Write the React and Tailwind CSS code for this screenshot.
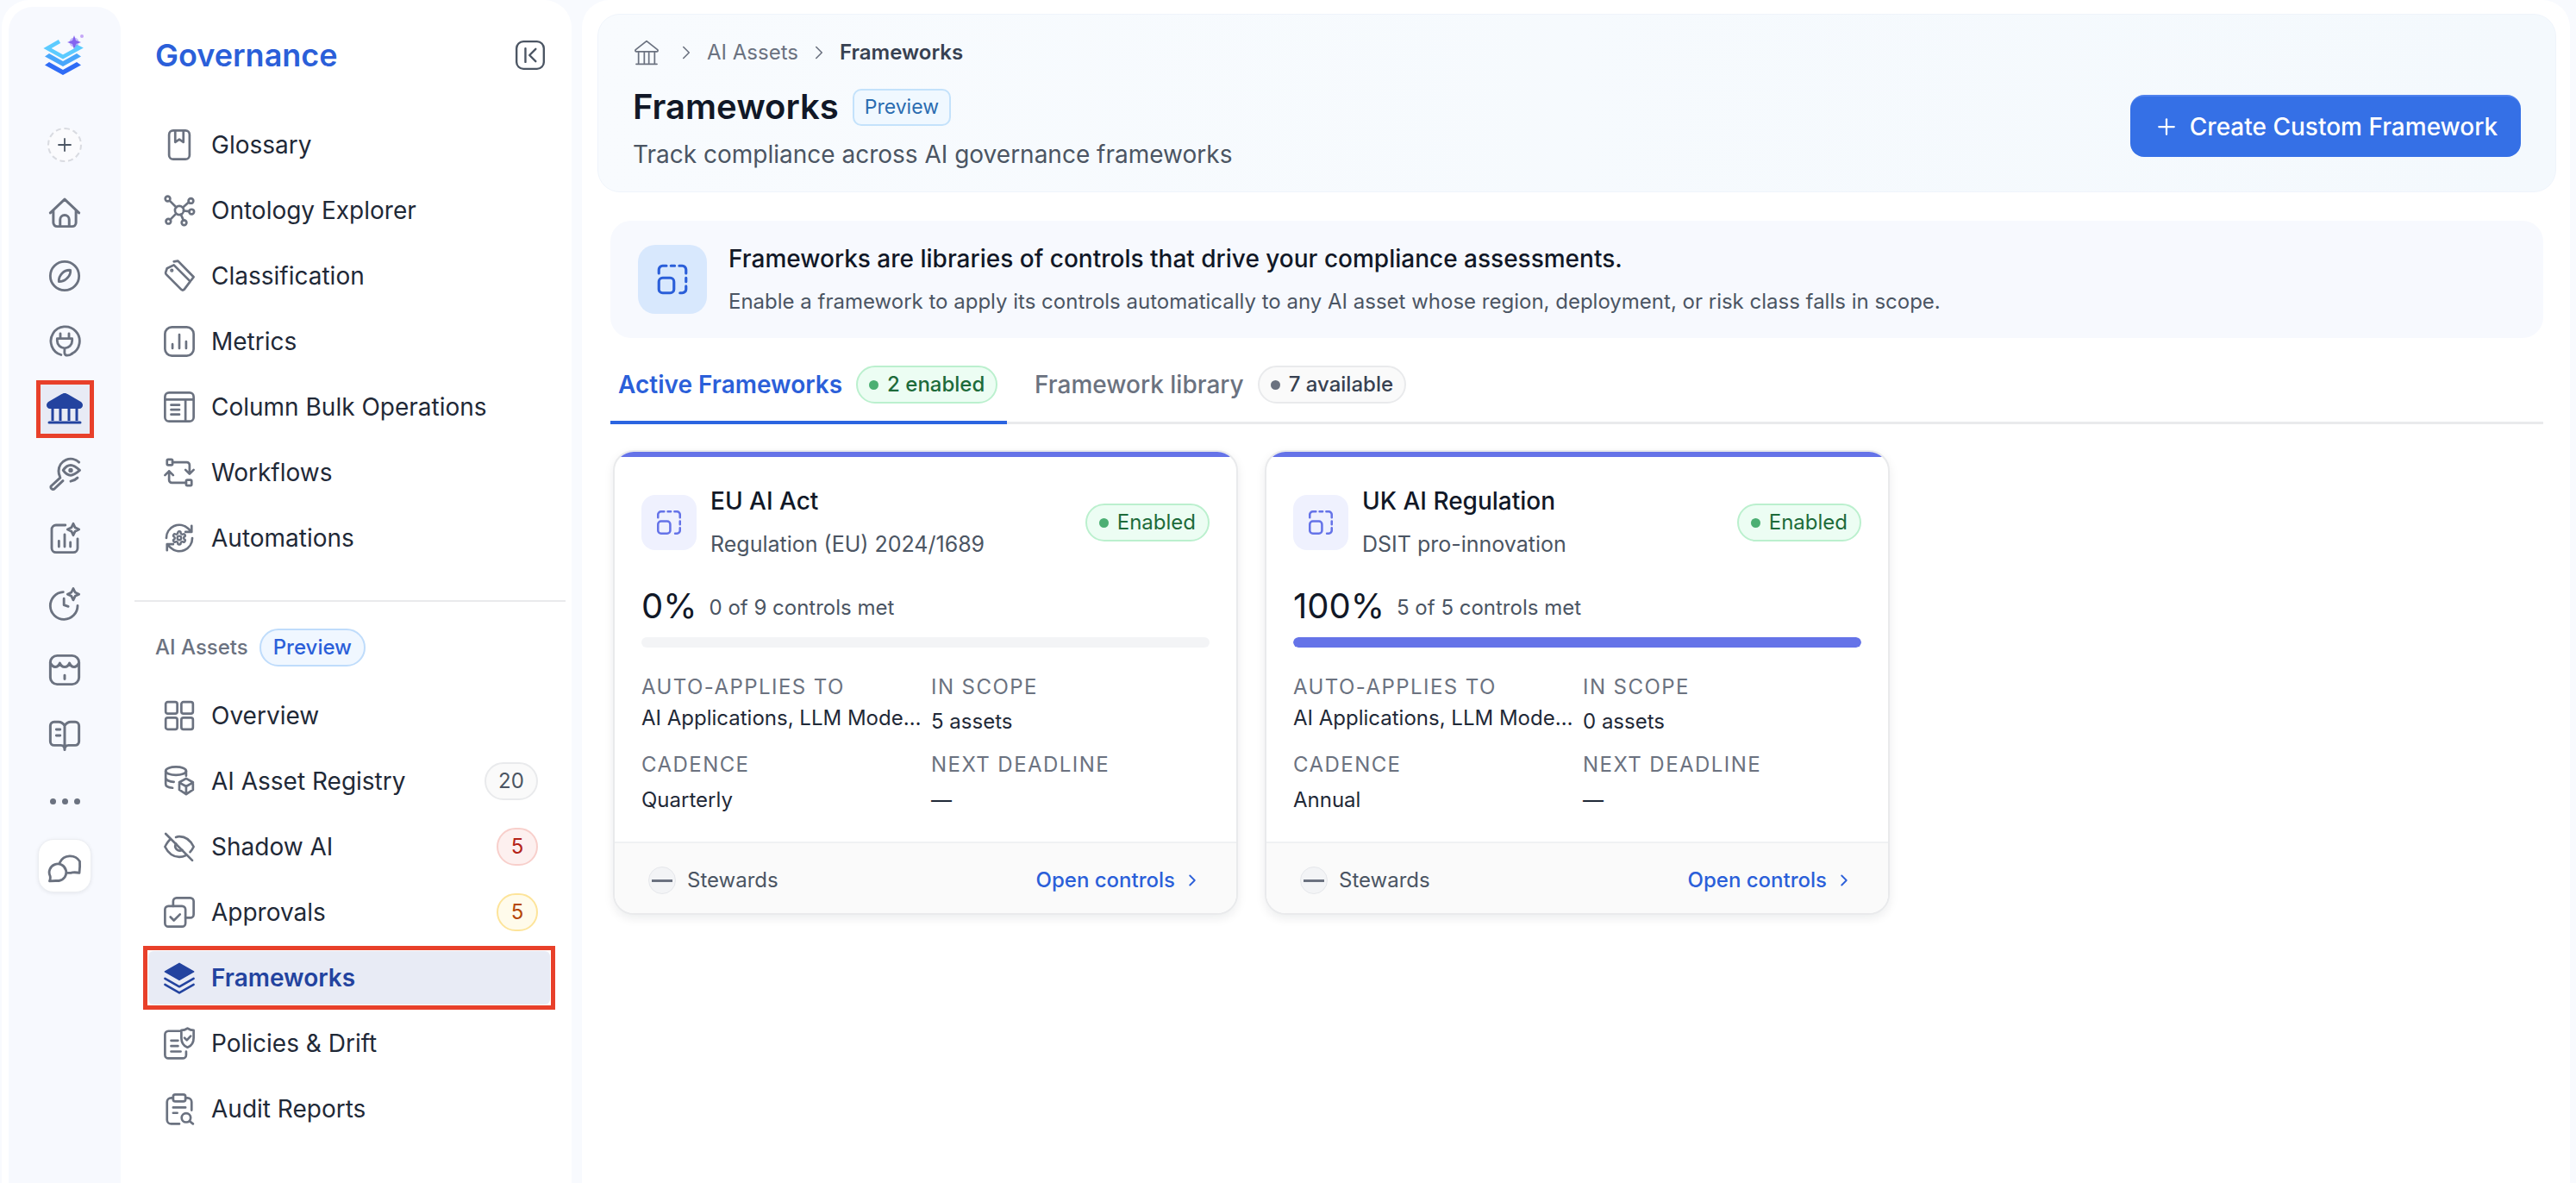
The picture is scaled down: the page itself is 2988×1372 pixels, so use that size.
import React from 'react';
import { ChevronRight, Plus } from 'lucide-react';

// svg wrapper for the outline icons, all of them are on a 24 grid
function Ico({ size = 38, sw = 1.7, children }) {
  return (
    <svg width={size} height={size} viewBox="0 0 24 24" fill="none" stroke="currentColor" strokeWidth={sw} strokeLinecap="round" strokeLinejoin="round" className="shrink-0">
      {children}
    </svg>
  );
}

const GEAR = 'M12.22 2h-.44a2 2 0 0 0-2 2v.18a2 2 0 0 1-1 1.73l-.43.25a2 2 0 0 1-2 0l-.15-.08a2 2 0 0 0-2.73.73l-.22.38a2 2 0 0 0 .73 2.73l.15.1a2 2 0 0 1 1 1.72v.51a2 2 0 0 1-1 1.74l-.15.09a2 2 0 0 0-.73 2.73l.22.38a2 2 0 0 0 2.73.73l.15-.08a2 2 0 0 1 2 0l.43.25a2 2 0 0 1 1 1.73V20a2 2 0 0 0 2 2h.44a2 2 0 0 0 2-2v-.18a2 2 0 0 1 1-1.73l.43-.25a2 2 0 0 1 2 0l.15.08a2 2 0 0 0 2.73-.73l.22-.39a2 2 0 0 0-.73-2.73l-.15-.08a2 2 0 0 1-1-1.74v-.5a2 2 0 0 1 1-1.74l.15-.09a2 2 0 0 0 .73-2.73l-.22-.38a2 2 0 0 0-2.73-.73l-.15.08a2 2 0 0 1-2 0l-.43-.25a2 2 0 0 1-1-1.73V4a2 2 0 0 0-2-2z';

const I = {
  home: <Ico size={42}><path d="M2.500 12.500 12 3.500l9.500 9M4.500 11v8a2.500 2.500 0 0 0 2.500 2.500h10a2.500 2.500 0 0 0 2.500-2.500v-8M9 21.500V17a3 3 0 0 1 6 0v4.500" /></Ico>,
  compass: <Ico size={40}><circle cx="12" cy="12" r="10" /><path d="M16 8c.4 4-3.600 8-8 8-.4-4.400 3.600-8.400 8-8z" /></Ico>,
  plug: <Ico size={40}><path d="M9.500 21.300A10 10 0 1 1 17 20.600" /><path d="M9 6.500V10M15 6.500V10M6.800 10h10.400v1.500a5.200 5.200 0 0 1-10.400 0V10zM12 16.700c0 2.300-.8 5 1.800 5 1.300 0 2.300-.4 3.200-1.100" /></Ico>,
  bankFill: (
    <svg width="42" height="36" viewBox="0 0 42 36" className="shrink-0">
      <path d="M21 0c-1.400 0-2.300.5-3.400 1.100L3 9.500C1.200 10.500 0 12 0 14c0 2.300 1.700 4 4 4h34c2.300 0 4-1.700 4-4 0-2-1.200-3.500-3-4.500L24.400 1.100C23.300.5 22.400 0 21 0z" fill="#23439f" />
      <path d="M7 18v14M16 18v14M26 18v14M35 18v14" stroke="#23439f" strokeWidth="3" />
      <path d="M3 34h36" stroke="#23439f" strokeWidth="3" strokeLinecap="round" />
    </svg>
  ),
  searchEye: <Ico size={42}><path d="M21.500 5.200A8 8 0 0 0 8 11c0 1.300.3 2.500.8 3.500M20.500 15.500a8 8 0 0 1-4.500 2.300" /><path d="M11 10.500c1.500-2.200 3.200-3.300 5-3.300s3.500 1.100 6 3.300c-2.500 2.200-4.200 3.300-6 3.300s-3.500-1.100-5-3.300z" /><circle cx="16" cy="10.500" r=".7" fill="currentColor" /><path d="m9 15.500-6 5.500a1.500 1.500 0 0 0 2 2l5.800-5.500" /></Ico>,
  chartSpark: <Ico size={40}><path d="M12.500 3H6a3 3 0 0 0-3 3v13a3 3 0 0 0 3 3h12a3 3 0 0 0 3-3v-6.500M8 18v-4M12 18V9.500M16 18v-3" /><path d="m18 2 1.300 2.700L22 6l-2.700 1.300L18 10l-1.300-2.700L14 6l2.700-1.300z" /></Ico>,
  clockSpark: <Ico size={40}><path d="M21 13.500A9.500 9.500 0 1 1 11 4M11.500 8.500V13l3 1" /><path d="m18 1.500 1.300 2.700L22 5.500l-2.700 1.300L18 9.500l-1.300-2.700L14 5.500l2.700-1.300z" /></Ico>,
  store: <Ico size={42}><rect x="2.500" y="2.500" width="19" height="19" rx="4.500" /><path d="M2.500 7.500c1 1.700 2 2.500 3.200 2.500s2.400-.8 3.100-2.500c.7 1.700 1.900 2.500 3.200 2.500s2.500-.8 3.200-2.500c.7 1.700 1.900 2.500 3.100 2.500s2.200-.8 3.200-2.500M12 15.500V18" /></Ico>,
  book: <Ico size={42}><path d="M12 5.500C11 4 9.800 3 8 3H5a2.500 2.500 0 0 0-2.500 2.500V16A2.500 2.500 0 0 0 5 18.500h4.500c1.500 0 2.500.8 2.500 3 0-2.200 1-3 2.500-3H19a2.500 2.500 0 0 0 2.500-2.500V5.500A2.500 2.500 0 0 0 19 3h-3c-1.800 0-3 1-4 2.500zM12 5.500V21.500M6.500 8h2.500M6.500 12h2.500" /></Ico>,
  chat: <Ico size={40}><path d="M8.600 9.800A8 8 0 0 1 22.500 9c.2 2.500 0 5.500-.3 8-1.700-.4-3.300-.4-4.700-.3-1.100.3-2.200.4-3.400.3" /><path d="M8 22.500c-2.300 0-4.500-.1-6.500.2.5-1.200.6-2.400.4-3.400A5.900 5.900 0 1 1 8 22.500z" /></Ico>,

  glossary: <Ico><rect x="4.500" y="1.500" width="15" height="21" rx="3" /><path d="M9 1.500V10l3-2 3 2V1.500" /></Ico>,
  ontology: <Ico><circle cx="12" cy="12" r="3.200" /><circle cx="3.500" cy="3.500" r="1.800" /><circle cx="20.500" cy="5" r="1.800" /><circle cx="21" cy="13" r="1.800" /><circle cx="4" cy="20" r="1.800" /><circle cx="15.500" cy="21" r="1.800" /><path d="m5 5 4.800 4.800M18.900 6l-4.400 3.900M15.200 12.300l4 .4M9.700 14.300 5.400 18.700M13.200 15l1.800 4.200" /></Ico>,
  tags: <Ico><path d="M3 6.500 8 4l12 12-4.500 6a1.500 1.500 0 0 1-2 0L2.500 11c-.5-.5-.6-1-.5-1.600z" /><path d="M8 1.500 11 1l11.500 11.800-1.800 2.400" /><circle cx="6.500" cy="8" r=".5" fill="currentColor" /></Ico>,
  metrics: <Ico><rect x="1.500" y="1.500" width="21" height="21" rx="5" /><path d="M7 17v-3M12 17V7M17 17v-5" /></Ico>,
  table: <Ico><rect x="1.500" y="1.500" width="21" height="21" rx="3" /><path d="M1.500 6.500h21M16.500 6.500v16M6 10.500h6M6 14h6M6 17.500h6" /></Ico>,
  workflow: <Ico><rect x="3" y="2.500" width="4" height="4" rx=".8" /><rect x="17" y="17.500" width="4" height="4" rx=".8" /><path d="M7 4.500h10.500a2 2 0 0 1 2 2V13M16.500 10l3 3 3-3M17 19.500H6.500a2 2 0 0 1-2-2V11M1.500 14l3-3 3 3" /></Ico>,
  auto: <Ico><path d="M2.500 12a9.500 9.500 0 0 1 16-7l2 2M21.500 12a9.500 9.500 0 0 1-16 7l-2-2M21 3v4.500h-4.500M3 21v-4.500h4.500" /><g transform="translate(6.200 6.200) scale(.48)" strokeWidth="3.200"><path d={GEAR} /><circle cx="12" cy="12" r="3" /></g></Ico>,

  grid: <Ico><rect x="2" y="2" width="8.500" height="8.500" rx="1.500" /><rect x="13.500" y="2" width="8.500" height="8.500" rx="1.500" /><rect x="2" y="13.500" width="8.500" height="8.500" rx="1.500" /><rect x="13.500" y="13.500" width="8.500" height="8.500" rx="1.500" /></Ico>,
  registry: <Ico><ellipse cx="9.500" cy="4.500" rx="7.500" ry="3" /><path d="M2 4.500V14c0 1.500 2 2.600 5 2.900M2 9.500c0 1.600 2.500 2.900 6 3M17 4.500V8" /><path d="m17 10 5 2.800v5.500L17 21.500l-5-3.200v-5.500zM12 13l5 2.800 5-2.800M17 15.800v5.700" /></Ico>,
  eyeOff: <Ico><path d="M2 2.500 21.500 22" /><path d="M5.500 6.500C4 7.700 2.800 9.500 1.500 12c2.500 5 6 7.500 10.500 7.500 1.700 0 3.300-.4 4.700-1.100M9.500 5c.8-.3 1.600-.5 2.500-.5 4.500 0 8 2.500 10.500 7.500-.7 1.500-1.600 2.800-2.600 3.900" /><path d="M9.600 9.800a3.300 3.300 0 0 0 4.500 4.600" /></Ico>,
  approvals: <Ico><rect x="1.500" y="7.500" width="15" height="15" rx="2.500" /><path d="M7.500 7.500V4A2.500 2.500 0 0 1 10 1.500h10A2.500 2.500 0 0 1 22.500 4v9.500A2.500 2.500 0 0 1 20 16h-3.500M5.500 15.500l2.500 2.500 4.500-4.500" /></Ico>,
  layersFill: (
    <svg width="38" height="38" viewBox="0 0 24 24" fill="none" className="shrink-0">
      <path d="M12 1.500 22.500 7.500 12 13.500 1.500 7.500z" fill="#23439f" stroke="#23439f" strokeWidth="1" strokeLinejoin="round" />
      <path d="m1.500 12.500 10.500 6 10.500-6M1.500 17l10.500 6 10.500-6" stroke="#23439f" strokeWidth="1.600" strokeLinecap="round" strokeLinejoin="round" />
    </svg>
  ),
  policies: <Ico><path d="M13 3H4a2.500 2.500 0 0 0-2.500 2.500v15A2.500 2.500 0 0 0 4 23h10.500a2.500 2.500 0 0 0 2.500-2.500V18M6 10h5M6 14h5M6 18h7" /><path d="M18 1c1.400 1 2.800 1.500 4.500 1.500v5.500c0 3.500-2 6-4.500 7-2.500-1-4.500-3.500-4.500-7V2.500C15.200 2.500 16.600 2 18 1z" /><path d="m15.800 8 1.700 1.700 2.800-3" /></Ico>,
  audit: <Ico><path d="M7.500 4H6a3 3 0 0 0-3 3v13a3 3 0 0 0 3 3h6M16.500 4H18a3 3 0 0 1 3 3v6" /><rect x="7.500" y="1.500" width="9" height="5" rx="1.500" /><path d="M7.500 11h9M7.500 15h3" /><circle cx="17" cy="18.500" r="3.300" /><path d="m19.500 21 2.500 2" /></Ico>,
};

function Logo() {
  return (
    <svg width="50" height="50" viewBox="0 0 50 50" className="shrink-0">
      <path d="M19 9 5 17l18 10 19-10.500-6-3" fill="none" stroke="#5ccbff" strokeWidth="4.500" strokeLinejoin="miter" />
      <path d="m7 23-5 3.500L23 38l21-11.500-5-3.500-16 9z" fill="#49a6fb" />
      <path d="m7 33-5 3.500L23 48l21-11.500-5-3.500-16 9z" fill="#2f6cf6" />
      <circle cx="36" cy="10" r="5.500" fill="#9b86f5" opacity=".55" />
      <path d="m36 2 2 6 6 2-6 2-2 6-2-6-6-2 6-2z" fill="#8463ef" />
      <circle cx="45" cy="3" r="2" fill="#c4a6f7" />
    </svg>
  );
}

function FrameworkIcon({ size = 44 }) {
  return (
    <svg width={size} height={size} viewBox="0 0 24 24" fill="none" stroke="currentColor" strokeWidth="1.800" strokeLinecap="round" className="shrink-0">
      <path d="M3 8V5.500A2.500 2.500 0 0 1 5.500 3H8M11 3h2.500M16.500 3h2A2.500 2.500 0 0 1 21 5.500V8M21 11v2.500M21 16.500v2a2.500 2.500 0 0 1-2.500 2.500H17" />
      <rect x="3" y="11" width="10" height="10" rx="2.500" />
    </svg>
  );
}

const RAIL = [
  { icon: I.home, cls: 'mt-[2px]' },
  { icon: I.compass, cls: '-mt-[2px]' },
  { icon: I.plug, cls: '' },
  { icon: I.bankFill, active: true, cls: 'mt-[2px]' },
  { icon: I.searchEye, cls: '-mt-[2px]' },
  { icon: I.chartSpark, cls: '' },
  { icon: I.clockSpark, cls: '' },
  { icon: I.store, cls: 'mt-[1px]' },
  { icon: I.book, cls: '' },
];

function Rail() {
  return (
    <div className="w-[130px] ml-[8px] mt-[8px] shrink-0 rounded-t-[28px] bg-[#f7f9fe] flex flex-col items-center">
      <div className="h-[112px] flex items-center justify-center"><Logo /></div>
      <div className="h-[76px] mt-[10px] flex items-center justify-center">
        <div className="w-[40px] h-[40px] rounded-full border-2 border-dashed border-[#d9dbe1] bg-[#fbfbfd] flex items-center justify-center text-[#4b5563]">
          <Plus size={24} strokeWidth={1.8} />
        </div>
      </div>
      {RAIL.map((r, i) => (
        <div key={i} className={`h-[76px] flex items-center justify-center ${r.cls}`}>
          {r.active ? (
            <div className="w-[57px] h-[57px] bg-[#e8ebf5] outline-[5px] outline-solid outline-[#e8402a] flex items-center justify-center">{r.icon}</div>
          ) : (
            <div className="text-[#6b7280]">{r.icon}</div>
          )}
        </div>
      ))}
      <div className="h-[76px] flex items-center justify-center gap-[7px]">
        <span className="w-[7px] h-[7px] rounded-full bg-[#6b7280]" />
        <span className="w-[7px] h-[7px] rounded-full bg-[#6b7280]" />
        <span className="w-[7px] h-[7px] rounded-full bg-[#6b7280]" />
      </div>
      <div className="mt-[6px] w-[62px] h-[62px] rounded-[18px] bg-white border border-[#eceef2] shadow-[0_1px_4px_rgba(16,24,40,0.08)] flex items-center justify-center text-[#6b7280]">
        {I.chat}
      </div>
    </div>
  );
}

function Count({ tone, children }) {
  const tones = {
    gray: 'min-w-[62px] bg-[#fafafa] border-[#e9eaec] text-[#4b5563]',
    red: 'w-[48px] bg-[#fdf0ef] border-[#f8cfcb] text-[#b42318]',
    amber: 'w-[48px] bg-[#fffbeb] border-[#fde49a] text-[#b54708]',
  };
  return (
    <span className={`ml-auto h-[44px] rounded-full border-2 flex items-center justify-center text-[24px] ${tones[tone]}`}>{children}</span>
  );
}

function NavItem({ icon, label, active, count, tone }) {
  const row = (
    <div className={`h-[62px] pl-[17px] pr-[14px] flex items-center gap-[18px] rounded-[6px] text-[28px] ${active ? 'bg-[#e8ebf5] text-[#23439f] font-semibold' : 'text-[#1f2937]'}`}>
      <span className={active ? '' : 'text-[#6b7280]'}>{icon}</span>
      <span>{label}</span>
      {count && <Count tone={tone}>{count}</Count>}
    </div>
  );
  if (!active) return row;
  // the red frame is a square annotation drawn over the rounded row
  return <div className="outline-[5px] outline-solid outline-[#e8402a] outline-offset-[1px]">{row}</div>;
}

function Sidebar() {
  return (
    <aside className="w-[661px] ml-[2px] shrink-0 bg-white rounded-t-[32px] flex">
      <Rail />
      <div className="flex-1 min-w-0">
        <div className="h-[76px] mt-[26px] pl-[40px] pr-[29px] flex items-center justify-between">
          <h1 className="text-[36px] font-semibold text-[#2b5fd9]">Governance</h1>
          <svg width="38" height="38" viewBox="0 0 24 24" fill="none" stroke="#4b5563" strokeWidth="1.500" strokeLinecap="round" strokeLinejoin="round">
            <rect x="2" y="2" width="20" height="20" rx="5" />
            <path d="M8.500 7v10M16 7.500 11.500 12l4.500 4.500" />
          </svg>
        </div>
        <div className="mt-[35px] ml-[32px] mr-[25px] flex flex-col gap-[14px]">
          <NavItem icon={I.glossary} label="Glossary" />
          <NavItem icon={I.ontology} label="Ontology Explorer" />
          <NavItem icon={I.tags} label="Classification" />
          <NavItem icon={I.metrics} label="Metrics" />
          <NavItem icon={I.table} label="Column Bulk Operations" />
          <NavItem icon={I.workflow} label="Workflows" />
          <NavItem icon={I.auto} label="Automations" />
        </div>
        <div className="mt-[41px] ml-[16px] mr-[7px] h-[2px] bg-[#e9eaec]" />
        <div className="mt-[31px] pl-[40px] flex items-center gap-[13px]">
          <span className="text-[24px] font-medium text-[#6b7280]">AI Assets</span>
          <span className="h-[44px] px-[14px] rounded-full border-2 border-[#bfdcfb] bg-[#f0f7ff] text-[24px] font-medium text-[#2b5fd9] flex items-center">Preview</span>
        </div>
        <div className="mt-[26px] ml-[32px] mr-[25px] flex flex-col gap-[14px]">
          <NavItem icon={I.grid} label="Overview" />
          <NavItem icon={I.registry} label="AI Asset Registry" count="20" tone="gray" />
          <NavItem icon={I.eyeOff} label="Shadow AI" count="5" tone="red" />
          <NavItem icon={I.approvals} label="Approvals" count="5" tone="amber" />
          <NavItem icon={I.layersFill} label="Frameworks" active />
          <NavItem icon={I.policies} label="Policies & Drift" />
          <NavItem icon={I.audit} label="Audit Reports" />
        </div>
      </div>
    </aside>
  );
}

function Field({ label, value, gap, narrow }) {
  return (
    <div className="min-w-0">
      <div className="h-[32px] leading-[32px] text-[24px] uppercase tracking-[0.06em] text-[#6b7280] whitespace-nowrap">{label}</div>
      <div className={`h-[32px] leading-[32px] text-[24px] text-[#1f2937] whitespace-nowrap ${gap} ${narrow ? 'w-[326px]' : ''}`}>{value}</div>
    </div>
  );
}

function FrameworkCard({ title, sub, pct, met, cadence, assets }) {
  return (
    <div className="w-[725px] h-[539px] rounded-[24px] border-2 border-[#e9eaec] bg-white shadow-[0_4px_12px_rgba(16,24,40,0.08)] overflow-hidden flex flex-col">
      <div className="h-[8px] bg-[#6573e8] -mt-[2px] shrink-0" />
      <div className="flex-1 px-[31px]">
        <div className="mt-[33px] h-[86px] flex items-center">
          <div className="w-[64px] h-[64px] rounded-[16px] bg-[#eff1fe] text-[#6573e8] flex items-center justify-center">
            <FrameworkIcon size={34} />
          </div>
          <div className="ml-[16px]">
            <div className="h-[36px] leading-[36px] text-[28px] font-medium text-[#111827]">{title}</div>
            <div className="mt-[14px] h-[36px] leading-[36px] text-[25px] text-[#4b5563]">{sub}</div>
          </div>
          <span className="ml-auto h-[44px] px-[14px] rounded-full border-2 border-[#bbf0ce] bg-[#ecfdf3] flex items-center gap-[10px] text-[24px] text-[#1d6b3a]">
            <span className="w-[11px] h-[11px] rounded-full bg-[#4caf73]" />
            Enabled
          </span>
        </div>
        <div className="mt-[30px] h-[48px] flex items-center gap-[14px]">
          <span className="text-[40px] text-[#111827]">{pct}%</span>
          <span className="text-[24px] text-[#4b5563] mt-[4px]">{met}</span>
        </div>
        <div className="mt-[12px] h-[12px] rounded-full bg-[#f3f4f6] overflow-hidden">
          <div className="h-full rounded-full bg-[#6573e8]" style={{ width: `${pct}%` }} />
        </div>
        <div className="mt-[30px] grid grid-cols-[336px_1fr] gap-y-[18px]">
          <Field label="Auto-applies to" value="AI Applications, LLM Mode…" gap="mt-[4px]" narrow />
          <Field label="In scope" value={assets} gap="mt-[8px]" />
          <Field label="Cadence" value={cadence} gap="mt-[9px]" />
          <Field label="Next deadline" value="—" gap="mt-[9px]" />
        </div>
      </div>
      <div className="h-[83px] shrink-0 border-t-2 border-[#f0f1f3] bg-[#fafafa] pl-[39px] pr-[40px] pt-[5px] flex items-center">
        <span className="w-[32px] h-[32px] rounded-full bg-[#f3f4f6] border border-[#e5e7eb] flex items-center justify-center">
          <span className="w-[24px] h-[3px] bg-[#6b7280]" />
        </span>
        <span className="ml-[13px] text-[24px] text-[#4b5563]">Stewards</span>
        <span className="ml-auto text-[24px] font-medium text-[#2b5fd9]">Open controls</span>
        <ChevronRight size={22} strokeWidth={2} className="ml-[9px] text-[#2b5fd9]" />
      </div>
    </div>
  );
}

function Main() {
  return (
    <main className="w-[2306px] ml-[12px] shrink-0 bg-white rounded-t-[32px] pt-[16px] overflow-hidden">
      <header className="ml-[18px] mr-[16px] h-[207px] rounded-[26px] border border-[#eff4fb] bg-gradient-to-r from-[#f8fbfe] to-[#f4f9fd] pl-[40px] pr-[40px] pb-[40px] flex justify-between">
        <div className="pt-[28px]">
          <div className="h-[32px] flex items-center text-[24px] text-[#6b7280]">
            <svg width="32" height="32" viewBox="0 0 24 24" fill="none" stroke="#6b7280" strokeWidth="1.300" strokeLinecap="round" strokeLinejoin="round" className="shrink-0">
              <path d="M12 2 21.500 9.500c.6.6.2 1.700-.7 1.700H3.200c-.9 0-1.300-1.100-.7-1.700zM5 11.200V21M10 11.200V21M14 11.200V21M19 11.200V21M3 22h18" />
            </svg>
            <ChevronRight size={26} strokeWidth={1.500} className="ml-[17px]" />
            <span className="ml-[11px]">AI Assets</span>
            <ChevronRight size={26} strokeWidth={1.500} className="ml-[11px]" />
            <span className="ml-[11px] font-semibold text-[#374151]">Frameworks</span>
          </div>
          <div className="mt-[17px] flex items-center gap-[16px]">
            <h2 className="text-[40px] leading-[60px] font-semibold text-[#111827]">Frameworks</h2>
            <span className="h-[43px] px-[12px] rounded-[10px] border-2 border-[#c4e2fb] bg-[#f0f8ff] flex items-center text-[23px] text-[#2b6cb0]">Preview</span>
          </div>
          <p className="mt-[3px] text-[28px] leading-[44px] text-[#4b5563]">Track compliance across AI governance frameworks</p>
        </div>
        <button className="self-end w-[453px] h-[72px] rounded-[16px] bg-[#3570e6] border-t-2 border-[#4f82ee] flex items-center justify-center gap-[12px] text-[28px] font-medium text-white">
          <Plus size={30} strokeWidth={1.8} />
          Create Custom Framework
        </button>
      </header>

      <section className="mt-[33px] ml-[33px] mr-[31px]">
        <div className="h-[136px] rounded-[24px] bg-[#f7f9fe] pl-[32px] flex items-center gap-[25px]">
          <div className="w-[80px] h-[80px] rounded-[20px] bg-[#d8e8fd] text-[#2b5fd9] flex items-center justify-center">
            <FrameworkIcon size={42} />
          </div>
          <div>
            <div className="text-[28px] leading-[40px] font-medium text-[#111827]">Frameworks are libraries of controls that drive your compliance assessments.</div>
            <div className="mt-[12px] text-[24px] leading-[36px] text-[#4b5563]">Enable a framework to apply its controls automatically to any AI asset whose region, deployment, or risk class falls in scope.</div>
          </div>
        </div>

        <div className="mt-[8px] h-[92px] border-b-[3px] border-[#e9eaec] flex">
          <div className="w-[460px] h-[92px] pt-[4px] border-b-[4px] border-[#2b64e0] pl-[9px] flex items-center gap-[16px]">
            <span className="text-[28px] font-semibold text-[#2b5fd9]">Active Frameworks</span>
            <span className="h-[44px] px-[13px] rounded-full border-2 border-[#bbf0ce] bg-[#ecfdf3] flex items-center gap-[10px] text-[24px] font-medium text-[#1d6b3a]">
              <span className="w-[11px] h-[11px] rounded-full bg-[#4caf73]" />
              2 enabled
            </span>
          </div>
          <div className="ml-[32px] h-[92px] flex items-center gap-[16px]">
            <span className="text-[28px] font-medium text-[#6b7280]">Framework library</span>
            <span className="h-[44px] px-[13px] rounded-full border-2 border-[#e9eaec] bg-[#fafafa] flex items-center gap-[10px] text-[24px] font-medium text-[#374151]">
              <span className="w-[11px] h-[11px] rounded-full bg-[#6b7280]" />
              7 available
            </span>
          </div>
        </div>

        <div className="mt-[30px] ml-[3px] flex gap-[31px]">
          <FrameworkCard title="EU AI Act" sub="Regulation (EU) 2024/1689" pct={0} met="0 of 9 controls met" cadence="Quarterly" assets="5 assets" />
          <FrameworkCard title="UK AI Regulation" sub="DSIT pro-innovation" pct={100} met="5 of 5 controls met" cadence="Annual" assets="0 assets" />
        </div>
      </section>
    </main>
  );
}

export default function App() {
  return (
    <div className="w-[2988px] h-[1372px] overflow-hidden bg-[#f8fafe] flex font-['Inter',sans-serif]">
      <Sidebar />
      <Main />
    </div>
  );
}
